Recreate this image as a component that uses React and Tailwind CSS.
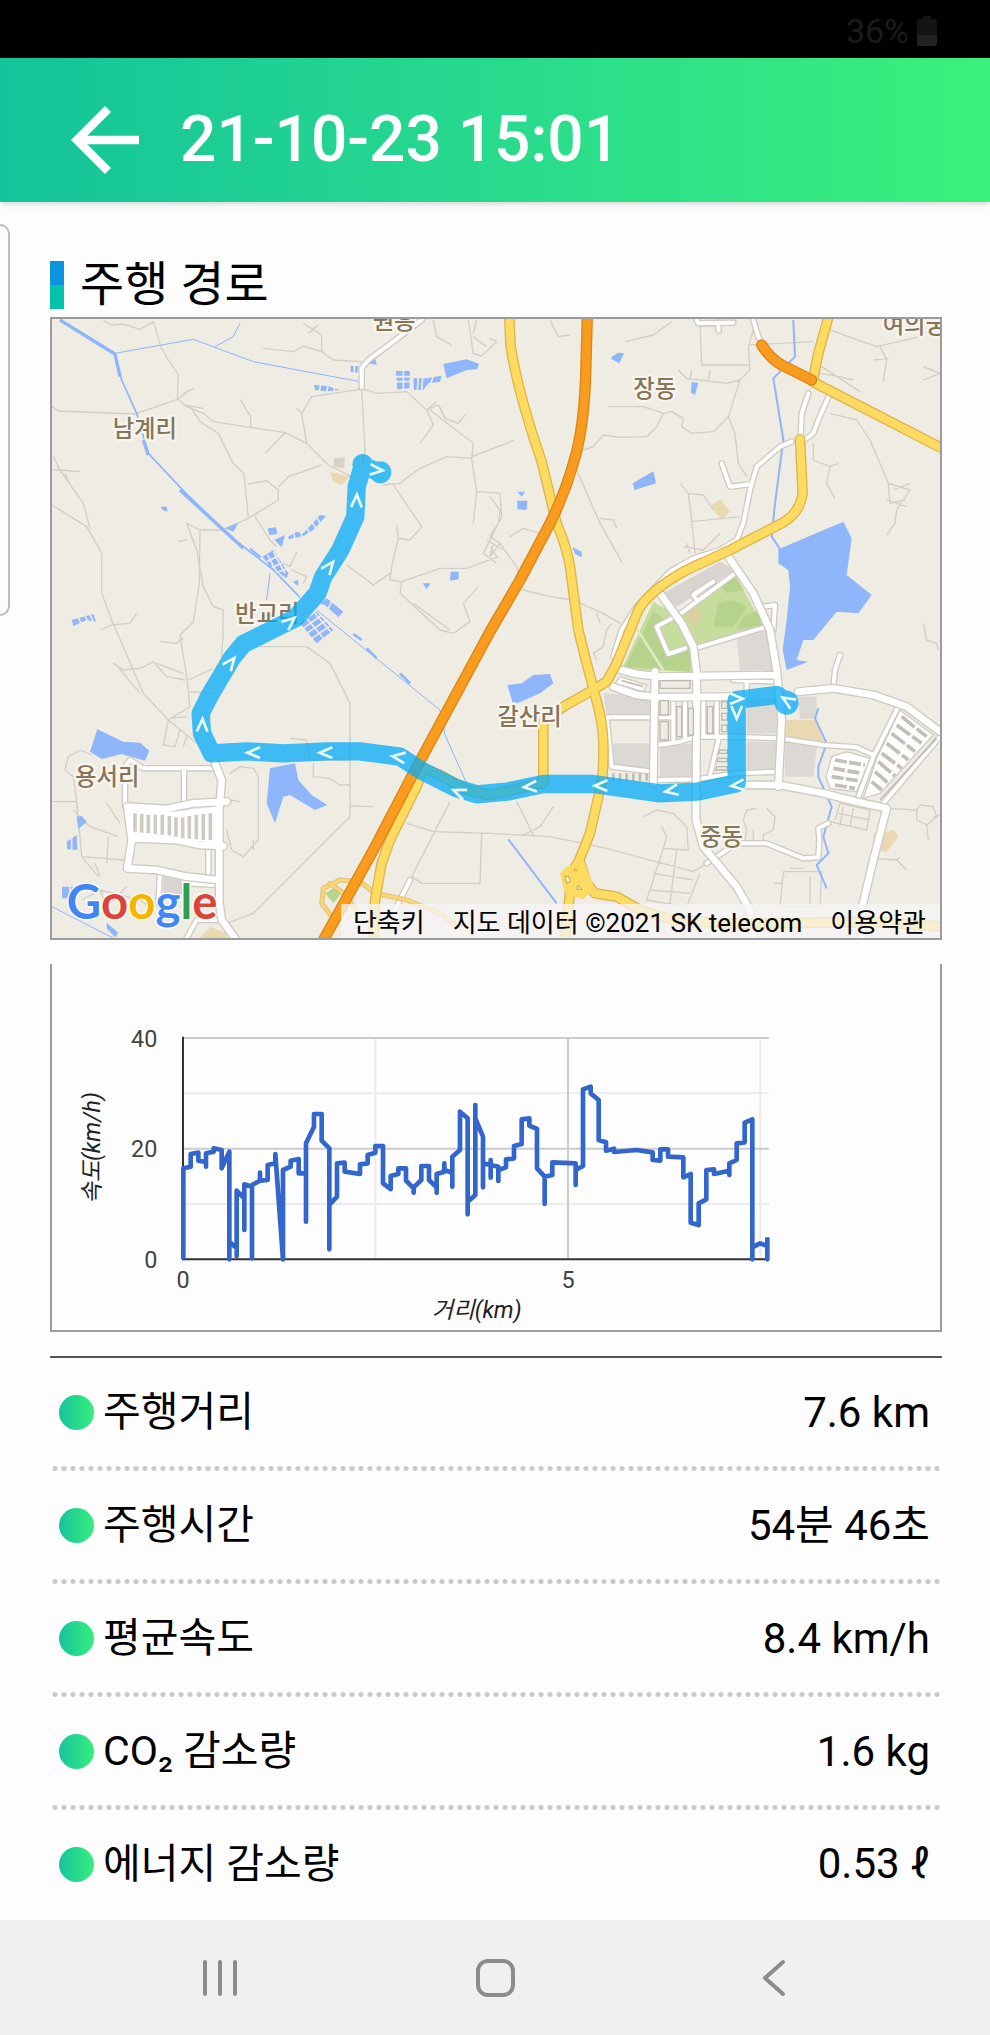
import React from "react";
import { MdArrowBack } from "react-icons/md";

const stats = [
  { label: "주행거리", value: "7.6 km" },
  { label: "주행시간", value: "54분 46초" },
  { label: "평균속도", value: "8.4 km/h" },
  { label: "CO₂ 감소량", value: "1.6 kg" },
  { label: "에너지 감소량", value: "0.53 ℓ" },
];

// Map geometry
const lanes = [
  "M190 32L215 45L250 42L300 58L340 35L362 110L385 150L415 195L412 265L440 290L490 310L520 335L630 352L735 368L800 400L865 465L935 500",
  "M36 290L55 303L285 312L412 268L450 240M412 268L440 245L462 235M430 285L490 295",
  "M455 295L480 335L535 370L580 460L612 490L625 625L545 660L480 660L440 640L470 720L490 830L520 890L550 900L548 960",
  "M480 660L478 820L460 935L420 975L440 1100L450 1190L385 1230L310 1150L215 930L185 850L185 730L140 650L36 585",
  "M36 480L60 480L130 580L150 655M60 480L40 440M60 480L120 485M75 490L85 515",
  "M215 945L270 940L290 910M215 945L180 960M415 695L440 690",
  "M600 268L632 320L632 355M735 368L675 430M800 400L785 310L815 260L960 238M785 310L770 295",
  "M965 235L975 420L968 460M965 235L1010 250L1100 245L1160 300L1180 345L1140 400M1160 300L1190 275",
  "M670 115L760 125L790 108L845 125L880 150L965 155M845 125L845 75L790 40M805 70L835 45",
  "M1180 30L1190 80L1235 105M1285 30L1300 130L1325 138L1370 95M1300 80L1340 110M1310 30L1300 70",
  "M1170 300L1300 400L1295 445L1220 440L1140 475L1080 520L1030 525M1295 440L1400 400L1420 390",
  "M1160 300L1195 285L1215 325L1255 340L1275 315M1215 325L1200 290",
  "M1295 445L1310 545L1380 550L1385 620L1330 730L1370 760M1310 545L1300 640M1340 690L1390 720M1360 700L1350 740",
  "M1060 525L1145 650L1110 690L1075 685L1055 770L1050 810L1085 815L1200 775L1280 775L1375 740M1075 685L1070 645",
  "M1085 815L1080 850L1200 960L1240 970L1290 935M1120 880L1230 960M1290 935L1270 880L1315 830",
  "M625 522L680 512L715 540L715 570L625 625M715 530L745 500L845 465M645 620L690 690L710 710",
  "M920 765L1000 825L1050 790M750 770L770 725M750 770L700 745M755 780L800 800L790 820",
  "M660 1010L800 1010L870 1060L930 1180L930 1520L640 1810L560 1840M930 1488L1000 1490",
  "M225 1060L300 1150M220 1060L250 1080L300 1075L340 1055M340 1055L380 1100L435 1110M350 1060L430 1090M445 1110L520 1075M450 1145L520 1150",
  "M385 1230L470 1300M390 1225L440 1220M385 1230L370 1305L405 1310L420 1260M440 1280L430 1310",
  "M550 960L545 1040M360 995L410 1000L430 985M750 1285L800 1290L810 1350L930 1350M820 1360L820 1400L870 1405L900 1425L930 1425",
  "M36 1475L110 1475L100 1400L75 1380L85 1340L120 1320L155 1335M110 1475L125 1640L175 1700M100 1500L150 1550L235 1580M200 1480L240 1540M125 1640L255 1650M205 1580L200 1660",
  "M570 1390L600 1370L640 1375L655 1400L655 1590L610 1640L575 1620L560 1560M640 1590L640 1620M570 1470L600 1475",
  "M125 1770L180 1740L200 1790L260 1730M180 1740L300 1770L340 1800M165 1660L180 1700",
  "M1230 1475L1115 1700L1145 1720L1320 1720L1325 1570M1100 1540L1180 1565L1350 1570L1530 1580L1700 1615L1960 1685L2000 1660M1430 1475L1480 1575",
  "M1350 85L1370 95M1530 30L1555 80L1590 75M1895 35L1840 75L1755 95",
  "M1630 420L1660 410L1690 375L1740 382L1820 380L1850 350L1870 310L1895 305L1930 325L1925 350L1955 370L2020 365L2065 320L2100 210L2130 180L2125 110L2140 60",
  "M1980 40L1985 165L2125 165M2125 105L2320 95M1705 290L1810 290L1870 310M1915 180L1940 205L2060 220L2100 210M1955 180L1950 210M2010 180L2005 210",
  "M2065 320L2085 370L2095 460L2120 500M1610 480L1680 640L1745 755M1680 625L1720 630L1730 655",
  "M1920 520L1945 550L1990 555L2020 600M1945 550L1955 630L1965 730M1955 635L2100 620M1930 710L1990 720L2040 670M1940 700L1950 730",
  "M2370 60L2510 110L2640 80M2520 110L2540 150L2530 215M2500 150L2545 145M2345 170L2460 245M2340 190L2400 200L2440 210",
  "M2370 310L2450 330L2490 390L2545 520L2610 540L2570 600L2565 640L2540 675M2545 520L2550 580L2595 570M2540 570L2600 590M2560 540L2610 520",
  "M2320 400L2320 450L2370 470L2360 520L2385 565M2370 470L2395 460M2650 170L2700 190L2650 210",
  "M1350 560L1380 600L1375 640L1350 680L1380 700L1430 770L1450 840L1530 860L1600 870L1690 910L1740 940M1410 680L1450 655L1500 670L1530 640M1350 740L1380 700M1350 710L1370 740M1670 910L1680 940",
  "M1715 940L1700 960L1690 1010L1660 1030L1670 1050M2650 940L2660 990L2690 1000L2695 1020",
  "M1540 1490L1500 1550L1450 1575M1810 1520L1850 1500L1900 1510L1940 1550L1945 1620L1870 1615L1820 1770L1940 1790L1980 1690M1865 1550L1880 1580L1870 1615M1840 1690L1960 1710M1830 1740L1950 1750M1910 1620L1890 1780",
  "M2110 1530L2120 1500L2150 1495M2180 1495L2205 1520L2200 1560L2170 1575L2170 1590M2110 1530L2120 1560L2115 1590M2140 1560L2140 1590",
  "M2370 1535L2480 1560L2490 1500L2400 1480L2385 1530M2410 1490L2400 1550M2440 1495L2430 1550M2395 1510L2490 1530",
  "M2540 1495L2630 1500L2640 1485L2680 1490L2690 1520L2660 1545L2630 1530L2630 1500M2660 1545L2665 1590M2680 1520L2700 1515",
  "M2230 1685L2345 1685L2340 1790L2220 1790L2230 1685M2250 1675L2290 1675M2225 1720L2200 1720M2235 1700L2240 1700M2310 1700L2310 1780M2505 1645L2570 1650L2600 1680M2570 1650L2580 1640",
];

const whiteWide = [
  "M1845 1085L1840 1420",
  "M1860 850L1925 940L1960 1010L1970 1090L1968 1530L1990 1610L2090 1730L2130 1800L2140 1884",
  "M2065 740L2140 850L2190 960L2210 1080L2225 1230L2215 1430",
  "M1735 1078L1790 1092L1860 1100L2210 1095",
  "M1720 1130L1790 1155L1860 1162L2080 1160",
  "M2110 1425L2220 1425L2350 1450L2450 1475L2540 1495L2500 1650L2468 1785L2465 1884",
  "M2275 1145L2380 1135L2500 1155L2600 1190L2700 1265",
  "M525 1360L545 1410L538 1500L538 1780L545 1830L585 1884",
  "M262 1490L275 1590L262 1675L350 1680L440 1700L535 1710",
  "M262 1490L380 1497L460 1480L560 1475M275 1585L410 1590L480 1605L550 1608",
];

const whiteNarrow = [
  "M965 232L965 175L985 150L1060 95L1145 30",
  "M2140 30L2155 80L2170 110",
  "M2305 250L2285 310L2282 380",
  "M2370 250L2335 330L2320 370L2290 392",
  "M2255 395L2220 410L2150 470L2130 540L2110 640L2090 690L2040 720L1960 745L1890 785L1790 890L1745 960L1720 1040",
  "M2045 460L2070 530L2135 522",
  "M1970 30L1975 40L2080 38M2035 38L2036 62",
  "M1965 1015L2180 950",
  "M1885 1032L1850 950L1930 905L2085 790M1885 1032L1935 1015M1965 850L2020 815L1960 855L1970 870",
  "M2170 890L2205 885L2200 960",
  "M1855 1305L1920 1295L1970 1280L2080 1280L2220 1285L2350 1305L2450 1312L2500 1335",
  "M2120 1110L2120 1160M2080 1110L2210 1115",
  "M1700 1222L1840 1222M1700 1222L1715 1370L1840 1385M1850 1222L1900 1222",
  "M1850 1410L1970 1408L2090 1390L2215 1385M2010 1395L2035 1290",
  "M1900 1165L1900 1290M1935 1165L1935 1290M1990 1165L1990 1280M2030 1170L2030 1280",
  "M2380 1130L2385 1080L2400 1035",
  "M2575 1190L2500 1340L2450 1475",
  "M2700 1280L2530 1480",
  "M2000 1660L2090 1600L2180 1600L2290 1645L2335 1642L2338 1590L2335 1555L2365 1540",
  "M255 1490L255 1370L270 1350L310 1375L530 1375M432 1380L432 1490",
  "M360 1690L355 1780L375 1810M430 1710L440 1790M440 1720L530 1725M505 1610L505 1710M440 1884L470 1830L540 1830",
  "M1110 1710L1060 1810",
];

const yellowRoads = [
  "M1408 30L1412 110Q1425 190 1450 280Q1475 370 1505 455L1550 640Q1580 710 1590 770L1615 960L1640 1060L1665 1155Q1690 1240 1690 1300Q1692 1380 1682 1430L1650 1570L1618 1650L1585 1705L1590 1750L1575 1884",
  "M2280 388L2288 550Q2280 610 2225 640L2070 720L1940 780Q1830 840 1795 900L1730 1060L1700 1115L1650 1145L1570 1190L1510 1235L1510 1415",
  "M2363 30L2335 130L2318 215L2350 232L2700 412",
  "M1618 1650L1640 1720L1665 1750L1730 1760L1800 1800L1900 1830L2100 1842L2500 1835L2700 1850",
  "M1510 1420L1450 1432L1350 1455L1280 1440L1200 1395L1150 1375L1130 1430L1050 1590L1025 1660L1005 1770L1000 1884",
];

const yellowRamps = [
  "M1005 1750L960 1715L900 1710L850 1735L845 1780L890 1840",
  "M870 1720L910 1750L950 1800M1010 1750L1100 1770L1200 1810L1250 1850",
];

const water = [
  "M2215 718L2410 635L2435 685L2420 795L2495 855L2455 910L2390 905L2320 990L2290 990L2270 1050L2305 1055L2240 1080L2228 1020L2240 930L2250 830L2245 780L2215 760Z",
  "M1778 520L1840 484L1848 520L1783 540Z",
  "M1715 140L1735 128L1752 130L1738 160L1715 148Z",
  "M1955 216L1975 218L1965 254L1953 248Z",
  "M1432 572L1462 572L1460 600L1432 598ZM1432 545L1455 545L1445 560Z",
  "M1597 712L1625 725L1625 742L1605 732Z",
  "M1402 1125L1445 1120L1480 1095L1530 1092L1540 1120L1500 1150L1420 1185Z",
  "M1210 162L1280 148L1318 162L1310 178L1280 180L1220 205Z",
  "M1068 183L1110 183L1108 235L1072 238ZM1120 205L1160 205L1205 197L1200 215L1165 220L1150 240L1122 240Z",
  "M932 168L955 168L952 188L932 186ZM985 160L1005 145L1010 165ZM822 225L862 228L900 240L860 244L825 240Z",
  "M172 1258L250 1295L300 1298L328 1322L315 1352L245 1332L185 1347L150 1325Z",
  "M690 1375L765 1360L775 1410L815 1455L862 1485L825 1500L750 1455L730 1460L705 1540L680 1480Z",
  "M110 1520L125 1518L140 1535L115 1558ZM80 1595L110 1575L112 1620L82 1618ZM66 1730L110 1730L108 1765L66 1765ZM200 1838L235 1868L225 1882L200 1855Z",
  "M95 930L160 912L168 935L140 930L100 948Z",
  "M683 655L708 652L712 672L688 675ZM745 680L770 665L790 670L840 615L858 618L820 660L790 678L745 688Z",
  "M703 690L735 675L725 712ZM668 740L700 720L745 790L740 805L690 770ZM758 815L775 810L775 828Z",
  "M555 655L595 640L580 665ZM362 590L380 590L383 605L368 600ZM1232 785L1256 785L1256 808L1230 812ZM1148 820L1172 820L1160 838Z",
  "M780 940L830 905L880 960L830 1000ZM842 880L860 865L910 905L895 922Z",
  "M630 712L665 740L660 745L630 720Z",
];

const streams = [
  "M2260 30L2265 140L2200 205L2230 390L2205 580L2195 680L2235 740",
  "M2335 1195L2325 1225L2360 1300L2335 1370L2335 1400L2375 1490L2350 1580L2365 1630L2330 1665L2360 1735",
  "M1405 1588L1550 1780",
];

// banks between the rice paddies
const banks = [
  "M1066 200H1112M1066 215H1112M1090 180V240M1135 203L1132 242M1148 203L1145 242M1180 197L1172 222",
  "M842 222L838 246M865 222L860 246M885 230L880 246M943 166V190",
  "M760 662L765 692M782 660L788 690M800 650L810 675M815 635L828 655M830 622L842 642",
  "M680 755L720 735M690 775L735 755M705 790L745 775M700 725L735 790M683 735L715 795",
  "M790 955L845 915M800 970L860 930M815 985L875 945M800 925L850 985M825 910L872 965M850 885L890 920M875 875L860 905",
  "M115 922L125 945M135 918L145 938M150 914L160 934M95 1572V1622M90 1728V1768",
];

const route =
  "M1020 487L968 468L950 530L946 620L900 722L850 800L832 850L765 925L610 1002L575 1045L510 1155L482 1210L486 1270L515 1330L620 1324L730 1330L860 1324L960 1324L1080 1340L1150 1385L1250 1435L1310 1453L1400 1445L1510 1422L1660 1422L1860 1450L1970 1445L2090 1420L2090 1170L2210 1155L2240 1175";

// x, y, rotation; zero points to the left
const arrows = [
  [1010, 480, 185], [950, 572, 92], [868, 770, 128], [750, 935, 140], [572, 1058, 128],
  [487, 1245, 92], [640, 1328, 0], [857, 1328, 0], [1075, 1341, 8], [1257, 1447, 22],
  [1470, 1430, -5], [1682, 1427, 0], [1894, 1442, -10], [2092, 1426, -5],
  [2090, 1208, -90], [2090, 1166, 180], [2243, 1172, 32],
];

const places = [
  { name: "원흥", x: 998, y: 56 },
  { name: "여의궁", x: 2528, y: 70 },
  { name: "남계리", x: 218, y: 382 },
  { name: "장동", x: 1780, y: 260 },
  { name: "반교리", x: 585, y: 937 },
  { name: "갈산리", x: 1372, y: 1244 },
  { name: "용서리", x: 105, y: 1426 },
  { name: "중동", x: 1980, y: 1606 },
];

const speedLine =
  "M430 928V655L452 650V612L475 608V632L498 636V650V610L521 605V595L545 600V655L568 605V928V875L590 895V918V722L613 745V840V703L636 710V925V705L660 692V668V692L683 690V645L706 640V612L729 928V660L752 650V632L776 627V670L798 670V815V580L822 530V492H845V572L868 595V898V765L891 740V640L914 638V665L960 672V643L983 640V615L1006 608V588H1029V700L1052 717V678L1075 672V655L1098 655V692L1121 715V728V712L1144 690V648H1167V690L1190 712V728V672L1213 665V640V660L1237 668V710V620L1260 600V485L1283 505V793V755L1306 735V465V505L1329 560V712V640L1352 645V683V630V645L1375 650V693V660L1398 652V628L1422 625V588L1445 582V508L1468 505V527L1491 537V655L1514 680V762V680L1537 675V637L1607 640V705V660L1629 648V418L1652 410V430L1676 450V570L1698 577V602L1722 596V606L1790 600L1838 607V630L1861 632V598L1884 598V620L1930 622V682L1952 672V818L1976 825V760L1999 748V660L2022 658V672L2068 662V675V640L2090 630V580L2114 577V518L2137 508V928V892L2160 880L2182 888V928V862";

function Road({ d, casing, color, width, edge = 5 }) {
  return (
    <g fill="none" strokeLinejoin="round" strokeLinecap="round">
      <path d={d.join("")} stroke={casing} strokeWidth={width + edge * 2} />
      <path d={d.join("")} stroke={color} strokeWidth={width} />
    </g>
  );
}

function RouteMap() {
  return (
    <svg viewBox="36 27 2664 1857" className="block w-full" role="img" aria-label="주행 경로 지도">
      <rect x="36" y="27" width="2664" height="1857" fill="#eeece3" />

      {/* blocks */}
      <path d="M1690 1150L1840 1160L1840 1215L1700 1215ZM1720 1300L1840 1300V1370H1720ZM1860 1310L1960 1300V1400H1860ZM2120 1170L2210 1165L2220 1270H2120ZM2120 1295H2215V1375L2120 1380ZM2235 1295L2330 1310L2320 1400H2235ZM2090 985L2185 960L2200 1080H2100ZM2275 1160H2330V1225L2280 1228Z" fill="#dcd8d3" />
      <path d="M1870 850L2040 755L2085 780L1910 890ZM370 1700L430 1700V1760H370Z" fill="#d9d4d0" />
      <path d="M2235 1230L2330 1230L2350 1295L2235 1280ZM2500 1575L2560 1560L2575 1580L2540 1625L2505 1620ZM870 485L930 500L905 525L880 515ZM2010 590L2040 568L2070 605L2045 628ZM480 1884L510 1850L560 1870V1884Z" fill="#ead8b0" />
      <path d="M882 445L915 442L912 475L880 470Z" fill="#d8d3c8" />
      <path d="M1745 1078L1840 875L1905 912L2085 790L2172 955L1965 1015L1955 1085Z" fill="#c6dd9e" />
      <path d="M1755 1070L1840 905L1890 940L1850 960L1885 1032L1950 1020V1085ZM2035 880L2080 870L2120 890L2080 950L2020 950ZM2045 830L2085 800L2110 840L2060 850ZM2110 920L2155 900L2165 945L2090 960Z" fill="#b5d38c" />
      <path d="M1930 905L1960 890L1990 920L1960 950Z" fill="#dccfa0" />
      <path d="M1780 940L1850 1050L1870 1080" stroke="#dcebbf" strokeWidth="8" fill="none" />
      <path d="M855 1750L880 1735L905 1750L880 1780Z" fill="#b9d491" />

      <path d={lanes.join("")} fill="none" stroke="#d3cec5" strokeWidth="4" strokeLinejoin="round" />

      {/* water */}
      <path d={water.join("")} fill="#8fb5fb" />
      <path d={banks.join("")} fill="none" stroke="#eeece3" strokeWidth="5" />
      <g fill="none" stroke="#8fb5fb" strokeLinejoin="round">
        <path d={streams.join("")} strokeWidth="6" />
        <path d="M60 30L225 132L245 210L290 310L325 430L430 542L560 670L700 780L780 862" strokeWidth="5" />
        <path d="M60 30L225 132L240 200M310 390L325 435M420 540L610 715" strokeWidth="10" />
        <path d="M225 130L460 88L640 155L960 215M600 40L580 80L525 110M830 900L910 965L1200 1200L1215 1275L1280 1420M690 790L680 870M36 1790L250 1900" strokeWidth="3" />
        <path d="M940 972L965 990M1080 1090L1110 1120M980 1015L1010 1045" strokeWidth="8" />
      </g>

      <Road d={whiteNarrow} casing="#cfcac2" color="#ffffff" width={12} edge={4} />
      <Road d={whiteWide} casing="#cfcac2" color="#ffffff" width={20} edge={4} />

      {/* housing estates */}
      <path d="M265 1500L400 1505L530 1490V1600L400 1585L285 1580Z" fill="#fff" />
      <path d="M285 1510V1565M305 1512V1568M325 1514V1570M346 1514V1572M367 1514V1574M388 1518V1576M408 1522V1580M428 1522V1584M448 1518V1586M469 1514V1588M490 1512V1590M511 1510V1590" stroke="#cfcbc3" strokeWidth="11" />
      <path d="M1720 1390V1412M1740 1390V1412M1760 1390V1412M1780 1390V1412M1800 1390V1412M1820 1390V1412" stroke="#bdb8b0" strokeWidth="7" />
      <path d="M1740 1100L1820 1125L1810 1145L1725 1120ZM2375 1340L2420 1325L2490 1345L2450 1445L2370 1435L2358 1400ZM2580 1200L2680 1275L2520 1450L2470 1465L2510 1345Z" fill="#fff" stroke="#cfcac2" strokeWidth="4" />
      <g stroke="#c3beb6" strokeWidth="11" fill="none">
        <path d="M2385 1350L2475 1365M2380 1375L2465 1390M2375 1400L2455 1412M2385 1425L2445 1435" strokeDasharray="36 7" />
        <path d="M2585 1220L2660 1280M2570 1245L2645 1300M2555 1270L2625 1325M2540 1300L2605 1350M2525 1330L2585 1375M2515 1355L2565 1398M2505 1385L2545 1420M2495 1415L2525 1440" strokeDasharray="50 8" />
        <path d="M2690 1285L2520 1470" strokeWidth="5" />
        <path d="M1745 1112L1810 1130" strokeWidth="5" />
      </g>
      <path d="M1860 1172H1885V1215H1860ZM1860 1235H1885V1290H1860ZM1910 1190H1925V1280H1910ZM1945 1195H1960V1275H1945ZM2002 1190H2018V1270H2002ZM1860 1112H1950V1135H1860ZM2045 1175H2062V1195H2045ZM2045 1210H2062V1230H2045ZM2045 1245H2062V1265H2045ZM2040 1320H2062V1330H2035ZM2035 1345H2062V1355H2032ZM2030 1370H2062V1380H2027Z" fill="#eeece3" stroke="#bdb8b0" strokeWidth="4" />

      <Road d={yellowRamps} casing="#dfc27c" color="#fbd571" width={9} edge={3} />
      <Road d={yellowRoads} casing="#dcb54e" color="#fddb60" width={24} edge={4} />
      <path d="M1560 1690L1580 1670L1630 1650L1662 1735L1630 1768L1575 1750Z" fill="#fddb60" />
      <path d="M1575 1700L1586 1698L1590 1715L1580 1720ZM1605 1675L1612 1682L1602 1682ZM1614 1725L1626 1738L1611 1738Z" fill="#eeece3" stroke="#c9a53f" strokeWidth="3" />
      <Road
        d={[
          "M1642 20L1638 160Q1635 350 1600 460Q1575 550 1530 640L1440 810L1350 965L1120 1390L1000 1620L845 1900",
          "M2165 105Q2190 145 2225 165L2315 210",
        ]}
        casing="#d98714"
        color="#f99b1f"
        width={26}
        edge={4}
      />

      <g fontSize="70" fontWeight="500" fill="#85765a" stroke="#f7f5ee" strokeWidth="14" strokeLinejoin="round" style={{ paintOrder: "stroke" }}>
        {places.map((p) => (
          <text key={p.name} x={p.x} y={p.y}>
            {p.name}
          </text>
        ))}
      </g>

      {/* ridden route */}
      <g opacity="0.75">
        <path d={route} fill="none" stroke="#03abf8" strokeWidth="55" strokeLinejoin="round" strokeLinecap="round" />
        <circle cx="968" cy="463" r="31" fill="#03abf8" />
        <circle cx="1021" cy="487" r="33" fill="#03abf8" />
        <circle cx="2240" cy="1178" r="36" fill="#03abf8" />
      </g>
      {arrows.map(([x, y, angle]) => (
        <path
          key={`${x}-${y}`}
          d="M20 -16L-18 0L20 16"
          transform={`translate(${x} ${y}) rotate(${angle})`}
          fill="none"
          stroke="#e9fbff"
          strokeWidth="8"
        />
      ))}

      <text
        x="80"
        y="1828"
        fontFamily="Lato, sans-serif"
        fontSize="142"
        fontWeight="700"
        stroke="#fff"
        strokeWidth="8"
        strokeLinejoin="round"
        style={{ paintOrder: "stroke" }}
      >
        <tspan fill="#4285f4">G</tspan>
        <tspan fill="#db4437">o</tspan>
        <tspan fill="#f4b400">o</tspan>
        <tspan fill="#4285f4">g</tspan>
        <tspan fill="#2f9e50">l</tspan>
        <tspan fill="#db4437">e</tspan>
      </text>
    </svg>
  );
}

function SpeedChart() {
  return (
    <svg viewBox="36 42 2664 1098" className="block w-full" role="img" aria-label="거리별 속도 그래프">
      <g fill="none" strokeWidth="6">
        <path d="M430 430H2187M430 762H2187M1006 264V928M2161 264V928" stroke="#ebebeb" />
        <path d="M430 264H2187M430 596H2187M1584 264V928" stroke="#cccccc" />
        <path d="M429 260V928H2187" stroke="#333333" />
        <path d={speedLine} stroke="#3366cc" strokeWidth="14" strokeLinejoin="round" />
      </g>
      <g fontSize="70" fill="#444444">
        <g textAnchor="end">
          <text x="352" y="290">40</text>
          <text x="352" y="622">20</text>
          <text x="352" y="953">0</text>
        </g>
        <g textAnchor="middle">
          <text x="429" y="1014">0</text>
          <text x="1584" y="1014">5</text>
        </g>
      </g>
      <g fontSize="70" fontStyle="italic" fill="#222222" textAnchor="middle">
        <text x="1310" y="1103">거리(km)</text>
        <text transform="translate(180 594) rotate(-90)">속도(km/h)</text>
      </g>
    </svg>
  );
}

export default function App() {
  return (
    <div className="relative flex min-h-screen flex-col bg-[#fdfdfd] font-[Roboto,'Noto_Sans_CJK_KR',sans-serif] text-black">
      {/* Status bar */}
      <div className="flex h-[58px] items-center justify-end gap-2 bg-black pt-1 pr-[53px] text-[34px] leading-none text-[#1b1b1b]">
        <span>36%</span>
        <svg viewBox="0 0 20 30" className="h-[30px] w-5" aria-hidden="true">
          <path d="M6 0H14V3H18Q20 3 20 5V28Q20 30 18 30H2Q0 30 0 28V5Q0 3 2 3H6Z" fill="#141414" />
          <path d="M0 19H20V28Q20 30 18 30H2Q0 30 0 28Z" fill="#222222" />
        </svg>
      </div>

      {/* Header */}
      <header className="flex h-36 items-center gap-6 bg-linear-to-r from-[#13c39a] to-[#3af17b] pt-5 pl-[54px] text-white shadow-md">
        <button type="button" aria-label="뒤로">
          <MdArrowBack className="size-[102px]" />
        </button>
        <h1 className="text-[64px] leading-none font-medium">21-10-23 15:01</h1>
      </header>

      {/* Edge panel handle */}
      <div className="absolute top-56 left-0 h-[392px] w-[10px] rounded-r-[10px] border-2 border-l-0 border-[#bdbdbd]" />

      <main className="grow pt-[50px] pr-12 pl-[50px]">
        <div className="flex h-[65px] items-center gap-4">
          <span className="h-12 w-[14px] bg-linear-to-b from-[#0b93e0] from-50% to-[#04c3aa] to-50%" />
          <h2 className="text-[48px] leading-none">주행 경로</h2>
        </div>

        <section className="relative border-2 border-[#9b9b9b]">
          <RouteMap />
          <div className="absolute right-0 bottom-0 flex h-[34px] items-center gap-7 bg-[#f5f5f5]/75 pt-1 pr-[14px] pl-3 text-[26px] leading-none whitespace-nowrap">
            <button type="button">단축키</button>
            <span>지도 데이터 ©2021 SK telecom</span>
            <a href="#terms">이용약관</a>
          </div>
        </section>

        <section className="mt-6 border-2 border-t-0 border-[#9b9b9b]">
          <SpeedChart />
        </section>

        <dl className="mt-6 border-t-2 border-[#555555] leading-none">
          {stats.map((s) => (
            <div
              key={s.label}
              className="flex h-[113px] items-center bg-[radial-gradient(circle,#c8c8c8_2px,transparent_3px)] bg-[length:9px_5px] bg-bottom bg-repeat-x pr-3 pb-1 pl-[9px] last:h-[108px] last:bg-none last:pb-0"
            >
              <span className="mr-[9px] size-[35px] rounded-full bg-linear-to-r from-[#16c49a] to-[#36ee7c]" />
              <dt className="text-[41px]">{s.label}</dt>
              <dd className="ml-auto text-[42px]">{s.value}</dd>
            </div>
          ))}
        </dl>
      </main>

      {/* System navigation */}
      <nav className="grid h-[115px] grid-cols-3 items-center justify-items-center bg-[#f0f0f0] px-20 text-[#8c8c8c]">
        <button type="button" aria-label="최근 앱">
          <svg viewBox="0 0 40 40" className="size-10" fill="none" stroke="currentColor" strokeWidth="4" strokeLinecap="round">
            <path d="M7 4V36M22 4V36M37 4V36" />
          </svg>
        </button>
        <button type="button" aria-label="홈">
          <svg viewBox="0 0 40 40" className="size-10" fill="none" stroke="currentColor" strokeWidth="4">
            <rect x="3" y="3" width="35" height="34" rx="10" />
          </svg>
        </button>
        <button type="button" aria-label="뒤로 가기">
          <svg viewBox="0 0 40 40" className="size-10" fill="none" stroke="currentColor" strokeWidth="4" strokeLinecap="round" strokeLinejoin="round">
            <path d="M31 4L13 20L31 36" />
          </svg>
        </button>
      </nav>
    </div>
  );
}
